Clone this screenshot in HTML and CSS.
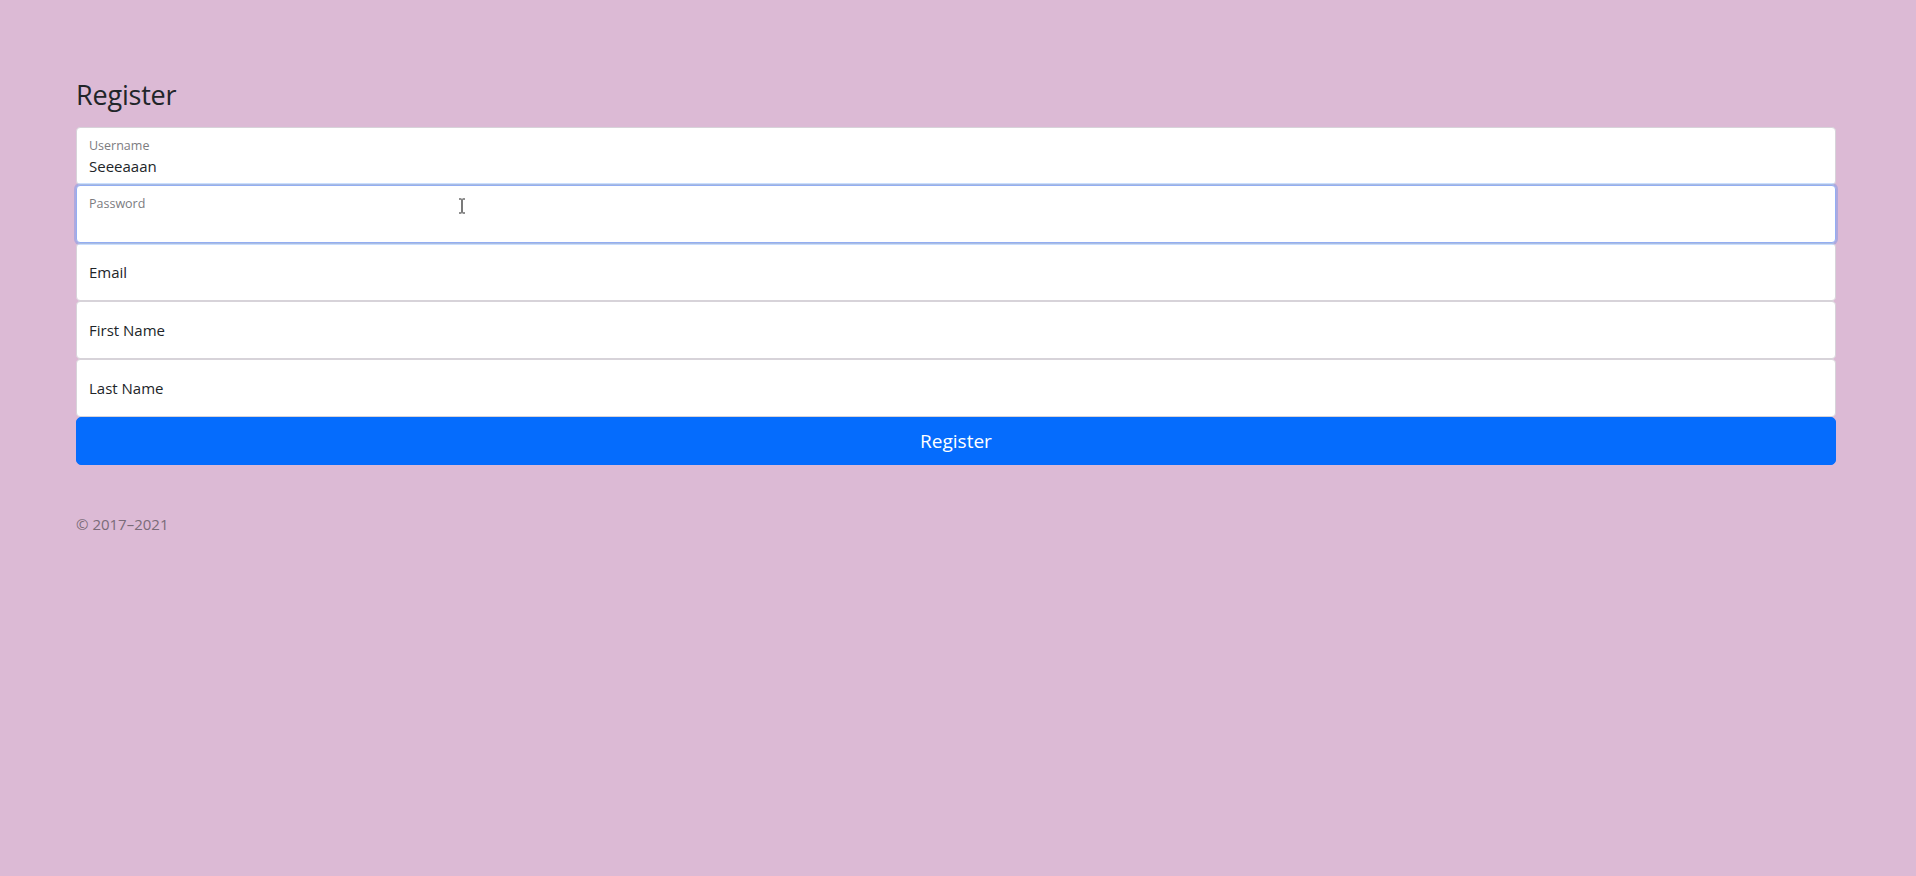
FILE: index.html
```html
<!DOCTYPE html>
<html lang="en">
<head>
<meta charset="utf-8">
<title>Register</title>
<link rel="stylesheet" href="styles.css">
</head>
<body>
<main class="page">
  <form class="form-register">
    <h1 class="title">Register</h1>
    <div class="fields">
      <div class="field">
        <input class="input filled" type="text" value="Seeeaaan">
        <label class="label floated">Username</label>
      </div>
      <div class="field focused">
        <input class="input filled focus" type="password" value="">
        <label class="label floated">Password</label>
        <svg class="ibeam" width="8" height="16" viewBox="0 0 8 16" aria-hidden="true">
          <path d="M1 1h2.5M4.5 1H7M4 1.5v13M1 15h2.5M4.5 15H7" stroke="#222" stroke-width="1.2" fill="none"/>
        </svg>
      </div>
      <div class="field">
        <input class="input" type="email" value="">
        <label class="label">Email</label>
      </div>
      <div class="field">
        <input class="input" type="text" value="">
        <label class="label">First Name</label>
      </div>
      <div class="field">
        <input class="input" type="text" value="">
        <label class="label">Last Name</label>
      </div>
    </div>
    <button class="btn" type="button">Register</button>
    <p class="copy">© 2017–2021</p>
  </form>
</main>
</body>
</html>
```

FILE: styles.css
```css
* { box-sizing: border-box; }
html, body { margin: 0; padding: 0; }
body {
  background: #dcbad5;
  font-family: "Open Sans", "Noto Sans", "Liberation Sans", sans-serif;
  color: #212529;
  font-size: 16px;
  line-height: 1.5;
}
.page {
  padding: 79px 80px 0 76px;
}
.form-register {
  display: flex;
  flex-direction: column;
}
.title {
  font-size: 27px;
  font-weight: 400;
  line-height: 1.2;
  margin: 0 0 16px 0;
  letter-spacing: -0.2px;
}
.fields {
  display: flex;
  flex-direction: column;
}
.field {
  position: relative;
  height: 58px;
}
.input {
  display: block;
  width: 100%;
  height: 58px;
  margin: 0;
  padding: 16px 12px;
  font: inherit;
  font-size: 15px;
  color: #212529;
  background: #fff;
  border: 1px solid #d7d3d9;
  border-radius: 4px;
  outline: none;
}
.input.filled {
  padding-top: 28px;
  padding-bottom: 8px;
}
.input.focus {
  border-color: #93aef2;
  box-shadow: 0 0 0 2px rgba(13,110,253,0.22);
  position: relative;
  z-index: 2;
}
.label {
  position: absolute;
  top: 0;
  left: 0;
  padding: 17px 13px 15px;
  font-size: 15px;
  line-height: 24px;
  color: #212529;
  pointer-events: none;
  z-index: 3;
}
.label.floated {
  font-size: 12.5px;
  line-height: 20px;
  padding: 9px 13px;
  color: #7c7c7f;
}
.ibeam {
  position: absolute;
  left: 382px;
  top: 13px;
  z-index: 4;
}
.btn {
  display: block;
  width: 100%;
  height: 48px;
  margin: 0;
  padding: 8px 16px;
  font: inherit;
  font-size: 19px;
  line-height: 30px;
  color: #fff;
  background: #056cfd;
  border: 1px solid #056cfd;
  border-radius: 5px;
  text-align: center;
}
.copy {
  margin: 48px 0 16px 0;
  color: #7a6b78;
  font-size: 15px;
}
```
